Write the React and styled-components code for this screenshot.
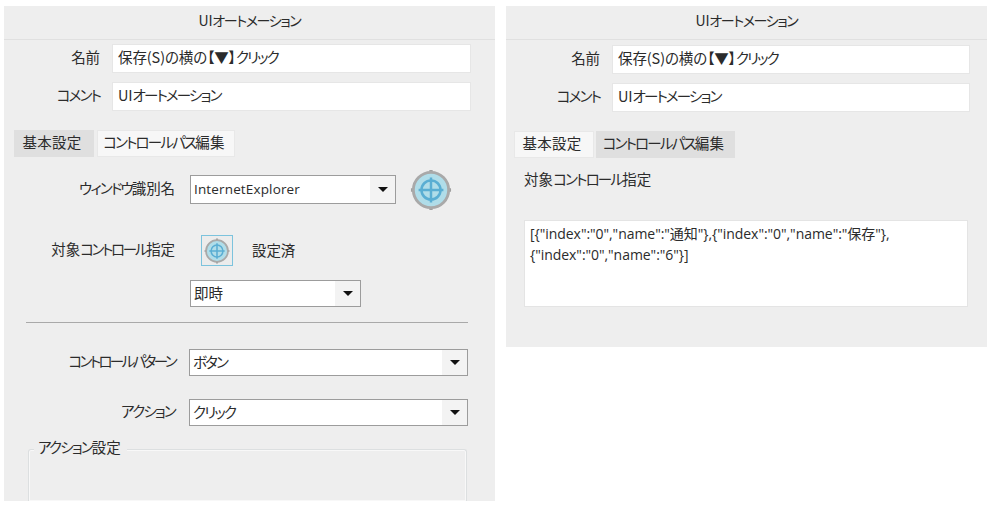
import React from "react";
import styled, { createGlobalStyle } from "styled-components";

const Global = createGlobalStyle`
  html, body { margin: 0; padding: 0; background: #fff; }
  body { font-family: "Noto Sans CJK JP", "Noto Sans", sans-serif; color: #2b2b2b; font-feature-settings: "palt"; font-weight: 400; }
`;
const Page = styled.div`
  width: 992px; height: 507px; box-sizing: border-box; overflow: hidden;
  display: flex; align-items: flex-start; gap: 11px; padding: 6px 0 0 4px;
`;
const Panel = styled.section`
  width: ${p => p.$w}px; height: ${p => p.$h}px; background: #eeeeee;
  box-sizing: border-box; display: flex; flex-direction: column; overflow: hidden;
`;
const Kana = styled.span`
  letter-spacing: var(--kana, -1.8px);
`;
const Header = styled.header`
  --kana: -1.35px;
  height: 34px; flex: none; box-sizing: border-box; border-bottom: 1px solid #e0e0e0; padding-bottom: 5px;
  display: flex; align-items: center; justify-content: center; font-size: 14px; letter-spacing: -0.2px;
`;
const Fields = styled.div`
  display: flex; flex-direction: column; gap: 9px; padding: ${p => p.$top}px ${p => p.$right}px 0 0;
`;
const TextRow = styled.div`
  display: flex; align-items: center; gap: 12px;
`;
const RowLabel = styled.label`
  ${p => (p.$kana ? `--kana: ${p.$kana}px;` : "")}
  width: ${p => p.$w}px; flex: none; text-align: right; font-size: 14.5px; letter-spacing: -0.1px; white-space: nowrap; line-height: 20px; padding-bottom: 3px; box-sizing: content-box;
`;
const TextInput = styled.div`
  flex: 1; height: 29px; box-sizing: border-box; background: #fff; border: 1px solid #e6e6e6; padding: 0 0 4px 5px;
  font-size: 14.5px; letter-spacing: -0.1px; white-space: nowrap; line-height: 24px;
`;
const Tabs = styled.div`
  display: flex; gap: ${p => p.$gap}px; margin: 19px 0 0 ${p => p.$left}px;
`;
const Tab = styled.div`
  width: ${p => p.$w}px; height: 27px; box-sizing: border-box; text-align: center; padding-right: 4px; line-height: 21px;
  font-size: 14.5px; letter-spacing: 0.3px; white-space: nowrap;
  background: ${p => (p.$on ? "#f7f7f7" : "#dfdfdf")};
  border: 1px solid ${p => (p.$on ? "#e8e8e8" : "#dfdfdf")};
`;
const FormRow = styled.div`
  display: flex; align-items: center; height: ${p => p.$h}px; margin-top: ${p => p.$top}px;
`;
const Gap = styled.div`
  width: ${p => p.$w}px; flex: none;
`;
const Select = styled.div`
  width: ${p => p.$w}px; height: ${p => p.$h}px; box-sizing: border-box; flex: none; background: #fff; border: 1px solid #9c9c9c;
  display: flex; align-items: center; justify-content: space-between; padding-left: 3px;
`;
const SelectText = styled.span`
  white-space: nowrap; padding-bottom: ${p => (p.$latin ? "1px" : "3px")};
  letter-spacing: ${p => (p.$latin ? "0.15px" : "-0.1px")}; font-family: ${p => (p.$latin ? '"Open Sans", sans-serif' : "inherit")}; font-size: ${p => (p.$latin ? "13.5px" : "14.5px")};
`;
const Arrow = styled.span`
  width: 25px; align-self: stretch; background: #f3f3f3; display: flex; align-items: center; justify-content: center;
  &::after { content: ""; border-left: 5px solid transparent; border-right: 5px solid transparent; border-top: 5px solid #111; }
`;
const TargetButton = styled.div`
  width: 32px; height: 31px; box-sizing: border-box; flex: none; margin-left: 26px; background: #ececec; border: 1px solid #7cc3dd;
  display: flex; align-items: center; justify-content: center;
`;
const StatusText = styled.span`
  margin-left: 19px; font-size: 14.5px; letter-spacing: -0.1px; padding-bottom: 3px;
`;
const Rule = styled.hr`
  margin: 15px 27px 0 22px; border: 0; border-top: 1px solid #a9a9a9; height: 0;
`;
const Group = styled.div`
  position: relative; margin: 23px 28px 0 24px; height: 80px; box-sizing: border-box;
  border: 1px solid #dcdfe0; border-bottom: 0; border-radius: 3px 3px 0 0;
  box-shadow: inset 0 0 0 1px #f8f8f8;
`;
const Legend = styled.span`
  position: absolute; left: 5px; top: -12px; padding: 0 6px 3px 4px; background: #eeeeee; font-size: 14.5px; letter-spacing: 0; line-height: 18px;
`;
const Caption = styled.div`
  margin: 11px 0 0 18px; font-size: 14.5px; letter-spacing: 0.1px; line-height: 20px;
`;
const Code = styled.div`
  width: 444px; height: 87px; box-sizing: border-box; margin: 31px 0 0 18px; background: #fff; border: 1px solid #e4e4e4;
  padding: 2px 5px; font-family: "Open Sans", "Noto Sans CJK JP", sans-serif; font-size: 14px; line-height: 21px; letter-spacing: -0.05px; white-space: nowrap;
`;

const T = ({ children }) => (
  <>
    {children.split(/([ァ-ヶー]+)/).map((part, i) =>
      i % 2 ? <Kana key={i}>{part}</Kana> : part
    )}
  </>
);

const Target = ({ size }) => (
  <svg width={size} height={size} viewBox="0 0 44 44">
    <path d="M22 1v5M22 38v5M1 22h5M38 22h5" stroke="#a0a0a0" strokeWidth="3.5" />
    <circle cx="22" cy="22" r="18.5" fill="#b0dde9" stroke="#a9a9a9" strokeWidth="3" />
    <circle cx="22" cy="22" r="10" fill="none" stroke="#5aaed3" strokeWidth="2.6" />
    <path d="M22 9v26M9 22h26" stroke="#5aaed3" strokeWidth="2.6" />
  </svg>
);

const SelectBox = ({ w, h, text, latin }) => (
  <Select $w={w} $h={h}>
    <SelectText $latin={latin}><T>{text}</T></SelectText>
    <Arrow />
  </Select>
);

const TopFields = ({ labelW, right }) => (
  <Fields $top={right === 17 ? 5 : 4} $right={right}>
    <TextRow>
      <RowLabel $w={labelW}>名前</RowLabel>
      <TextInput><T>保存(S)の横の【▼】クリック</T></TextInput>
    </TextRow>
    <TextRow>
      <RowLabel $w={labelW}><T>コメント</T></RowLabel>
      <TextInput><T>UIオートメーション</T></TextInput>
    </TextRow>
  </Fields>
);

export default function App() {
  return (
    <Page>
      <Global />
      <Panel $w={491} $h={495}>
        <Header><span><T>UIオートメーション</T></span></Header>
        <TopFields labelW={96} right={24} />
        <Tabs $left={10} $gap={3}>
          <Tab $w={80}>基本設定</Tab>
          <Tab $w={138} $on><T>コントロールパス編集</T></Tab>
        </Tabs>
        <FormRow $h={29} $top={18}>
          <RowLabel $w={171}><T>ウィンドウ識別名</T></RowLabel>
          <Gap $w={15} />
          <SelectBox w={206} h={29} text="InternetExplorer" latin />
          <Gap $w={14} />
          <Target size={42} />
        </FormRow>
        <FormRow $h={31} $top={31}>
          <RowLabel $w={171} $kana={-2.3}><T>対象コントロール指定</T></RowLabel>
          <TargetButton><Target size={26} /></TargetButton>
          <StatusText>設定済</StatusText>
        </FormRow>
        <FormRow $h={27} $top={14}>
          <Gap $w={186} />
          <SelectBox w={171} h={27} text="即時" />
        </FormRow>
        <Rule />
        <FormRow $h={27} $top={26}>
          <RowLabel $w={171} $kana={-2.6}><T>コントロールパターン</T></RowLabel>
          <Gap $w={14} />
          <SelectBox w={279} h={27} text="ボタン" />
        </FormRow>
        <FormRow $h={27} $top={23}>
          <RowLabel $w={171}><T>アクション</T></RowLabel>
          <Gap $w={14} />
          <SelectBox w={279} h={27} text="クリック" />
        </FormRow>
        <Group>
          <Legend><T>アクション設定</T></Legend>
        </Group>
      </Panel>
      <Panel $w={481} $h={341}>
        <Header><span><T>UIオートメーション</T></span></Header>
        <TopFields labelW={94} right={17} />
        <Tabs $left={8} $gap={2}>
          <Tab $w={80} $on>基本設定</Tab>
          <Tab $w={139}><T>コントロールパス編集</T></Tab>
        </Tabs>
        <Caption><T>対象コントロール指定</T></Caption>
        <Code>
          {'[{"index":"0","name":"通知"},{"index":"0","name":"保存"},'}
          <br />
          {'{"index":"0","name":"6"}]'}
        </Code>
      </Panel>
    </Page>
  );
}
